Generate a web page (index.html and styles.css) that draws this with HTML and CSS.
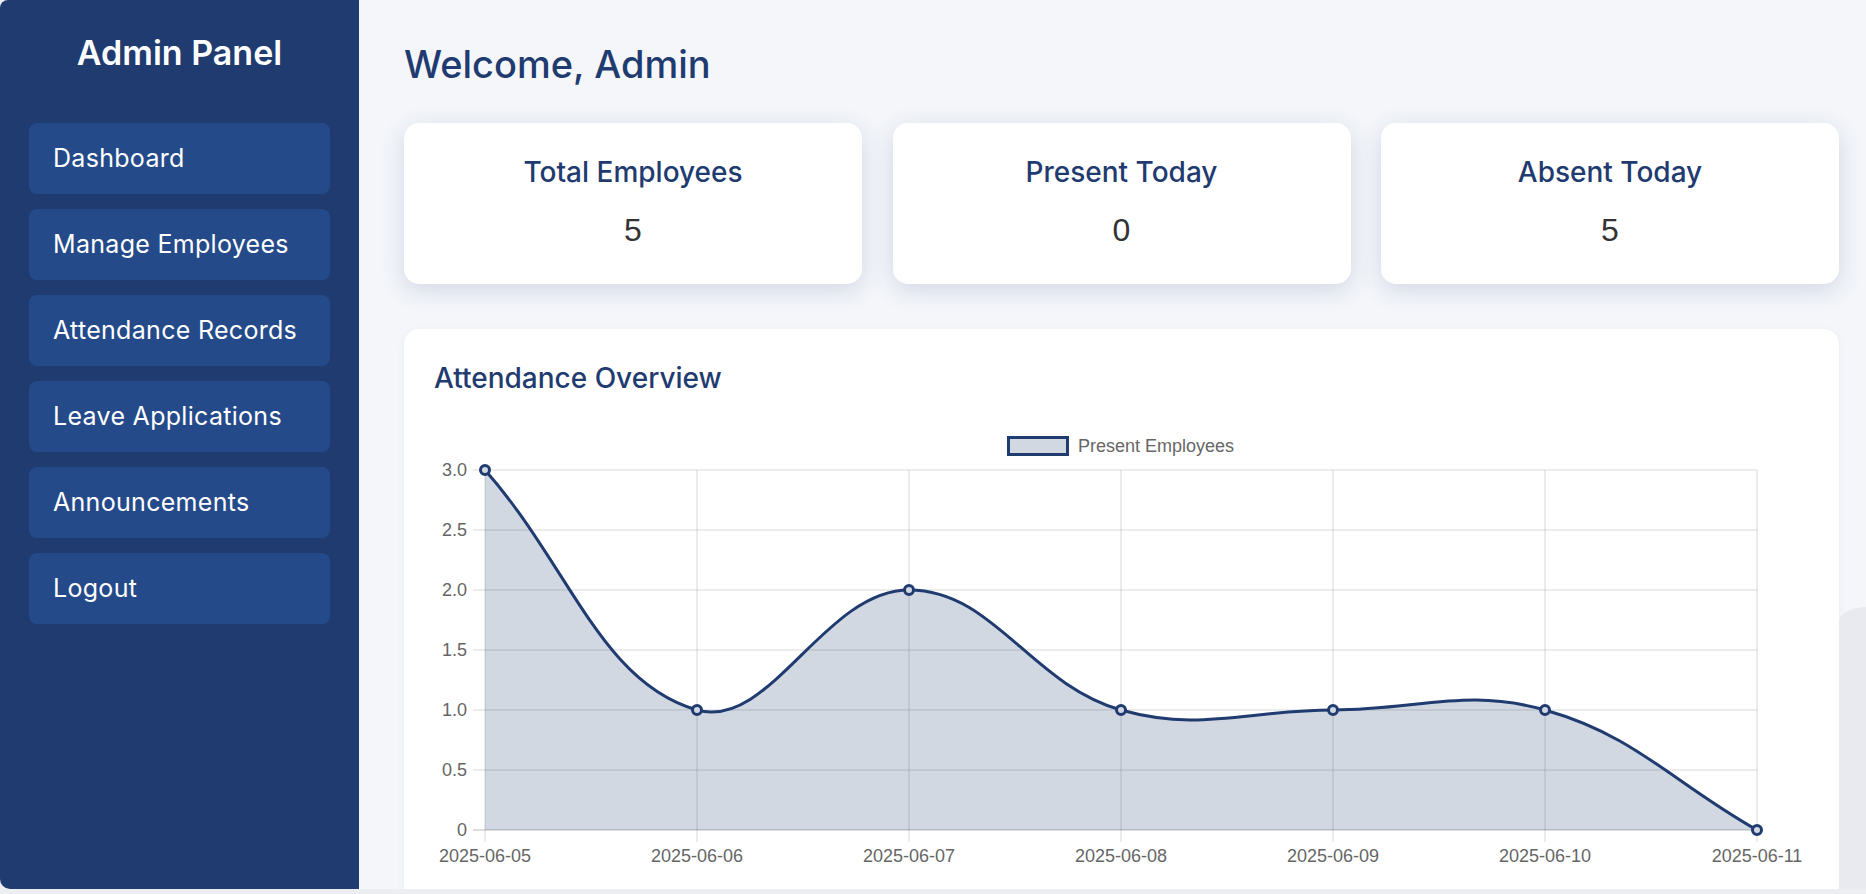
FILE: index.html
```html
<!DOCTYPE html>
<html lang="en">
<head>
    <meta charset="UTF-8">
    <meta name="viewport" content="width=device-width, initial-scale=1.0">
    <title>Admin Dashboard</title>
    <link rel="stylesheet" href="styles.css">
</head>
<body>
    <div class="app">
        <aside class="sidebar">
            <h2 class="brand">Admin Panel</h2>
            <nav class="nav">
                <a class="nav-link" href="#">Dashboard</a>
                <a class="nav-link" href="#">Manage Employees</a>
                <a class="nav-link" href="#">Attendance Records</a>
                <a class="nav-link" href="#">Leave Applications</a>
                <a class="nav-link" href="#">Announcements</a>
                <a class="nav-link" href="#">Logout</a>
            </nav>
        </aside>

        <main class="main">
            <h1 class="welcome">Welcome, Admin</h1>

            <section class="stats">
                <div class="stat-card">
                    <h3>Total Employees</h3>
                    <p>5</p>
                </div>
                <div class="stat-card">
                    <h3>Present Today</h3>
                    <p>0</p>
                </div>
                <div class="stat-card">
                    <h3>Absent Today</h3>
                    <p>5</p>
                </div>
            </section>

            <section class="chart-card">
                <h3 class="chart-title">Attendance Overview</h3>
                <svg class="chart" width="1375" height="480" viewBox="434 420 1375 480">
                    <!-- legend -->
                    <rect x="1008.5" y="437.5" width="59" height="17" fill="rgba(31,59,112,0.2)" stroke="#1f3b70" stroke-width="3"/>
                    <text class="legend" x="1078" y="452">Present Employees</text>

                    <!-- grid -->
                    <g stroke="rgba(0,0,0,0.1)" stroke-width="1.5">
                        <line x1="473" y1="470" x2="1757" y2="470"/>
                        <line x1="473" y1="530" x2="1757" y2="530"/>
                        <line x1="473" y1="590" x2="1757" y2="590"/>
                        <line x1="473" y1="650" x2="1757" y2="650"/>
                        <line x1="473" y1="710" x2="1757" y2="710"/>
                        <line x1="473" y1="770" x2="1757" y2="770"/>
                        <line x1="485" y1="470" x2="485" y2="842"/>
                        <line x1="697" y1="470" x2="697" y2="842"/>
                        <line x1="909" y1="470" x2="909" y2="842"/>
                        <line x1="1121" y1="470" x2="1121" y2="842"/>
                        <line x1="1333" y1="470" x2="1333" y2="842"/>
                        <line x1="1545" y1="470" x2="1545" y2="842"/>
                        <line x1="1757" y1="470" x2="1757" y2="842"/>
                    </g>
                    <line x1="473" y1="830" x2="1757" y2="830" stroke="rgba(0,0,0,0.18)" stroke-width="1.5"/>

                    <!-- y labels -->
                    <g class="tick" text-anchor="end">
                        <text x="467" y="476">3.0</text>
                        <text x="467" y="536">2.5</text>
                        <text x="467" y="596">2.0</text>
                        <text x="467" y="656">1.5</text>
                        <text x="467" y="716">1.0</text>
                        <text x="467" y="776">0.5</text>
                        <text x="467" y="836">0</text>
                    </g>

                    <!-- x labels -->
                    <g class="tick" text-anchor="middle">
                        <text x="485" y="862">2025-06-05</text>
                        <text x="697" y="862">2025-06-06</text>
                        <text x="909" y="862">2025-06-07</text>
                        <text x="1121" y="862">2025-06-08</text>
                        <text x="1333" y="862">2025-06-09</text>
                        <text x="1545" y="862">2025-06-10</text>
                        <text x="1757" y="862">2025-06-11</text>
                    </g>

                    <!-- data -->
                    <path fill="rgba(31,59,112,0.2)" d="M485,830 L485,470 C569.8,566 600.7,682.7 697,710 C770.3,730.7 824.2,590 909,590 C993.8,590 1030.3,684.3 1121,710 C1199.9,732.3 1248.2,710 1333,710 C1417.8,710 1466.1,687.7 1545,710 C1635.7,735.7 1672.2,782 1757,830 Z"/>
                    <path fill="none" stroke="#1f3b70" stroke-width="3" d="M485,470 C569.8,566 600.7,682.7 697,710 C770.3,730.7 824.2,590 909,590 C993.8,590 1030.3,684.3 1121,710 C1199.9,732.3 1248.2,710 1333,710 C1417.8,710 1466.1,687.7 1545,710 C1635.7,735.7 1672.2,782 1757,830"/>
                    <g fill="#d2d8e2" stroke="#1f3b70" stroke-width="3">
                        <circle cx="485" cy="470" r="4.5"/>
                        <circle cx="697" cy="710" r="4.5"/>
                        <circle cx="909" cy="590" r="4.5"/>
                        <circle cx="1121" cy="710" r="4.5"/>
                        <circle cx="1333" cy="710" r="4.5"/>
                        <circle cx="1545" cy="710" r="4.5"/>
                        <circle cx="1757" cy="830" r="4.5"/>
                    </g>
                </svg>
            </section>

            <div class="scroll-thumb"></div>
        </main>
    </div>
</body>
</html>
```

FILE: styles.css
```css
html, body {
    margin: 0;
    padding: 0;
    background: #eceef2;
}
.app {
    display: flex;
    height: 889px;
    overflow: hidden;
    background: #f4f6fa;
    border-radius: 8px 0 0 10px;
    font-family: "Inter", "Open Sans", sans-serif;
}

/* sidebar */
.sidebar {
    width: 359px;
    flex-shrink: 0;
    box-sizing: border-box;
    padding: 0 29px;
    background: #1f3b70;
}
.brand {
    margin: 31px 0 0;
    font-size: 34px;
    line-height: 44px;
    font-weight: 600;
    text-align: center;
    color: #fff;
}
.nav {
    display: flex;
    flex-direction: column;
    gap: 15px;
    margin-top: 48px;
}
.nav-link {
    display: block;
    height: 71px;
    line-height: 71px;
    padding: 0 24px;
    border-radius: 8px;
    background: #244a8a;
    color: #fff;
    font-size: 25px;
    letter-spacing: 0.3px;
    text-decoration: none;
}

/* main */
.main {
    flex: 1;
    position: relative;
    padding: 40px 27px 0 45px;
}
.welcome {
    margin: 0 0 35px;
    font-size: 38px;
    line-height: 48px;
    font-weight: 500;
    color: #1f3b70;
}
.stats {
    display: grid;
    grid-template-columns: repeat(3, 1fr);
    gap: 30.5px;
}
.stat-card {
    height: 161px;
    box-sizing: border-box;
    padding-top: 33px;
    border-radius: 15px;
    background: #fff;
    text-align: center;
    box-shadow: 0 6px 24px rgba(31, 59, 112, 0.16);
}
.stat-card h3 {
    margin: 0;
    font-size: 28px;
    line-height: 33px;
    font-weight: 500;
    color: #1f3b70;
}
.stat-card p {
    margin: 22px 0 0;
    font-family: "Liberation Sans", Arial, sans-serif;
    font-size: 32px;
    line-height: 38px;
    color: #333;
}
.chart-card {
    margin-top: 45px;
    padding: 31px 30px 0;
    border-radius: 15px;
    background: #fff;
    box-shadow: 0 2px 10px rgba(31, 59, 112, 0.05);
    height: 700px;
}
.chart-title {
    margin: 0 0 24px;
    font-size: 28px;
    line-height: 36px;
    font-weight: 500;
    color: #1f3b70;
}
.chart {
    display: block;
}
.chart text {
    font-family: "Liberation Sans", Arial, sans-serif;
    font-size: 18px;
    fill: #666;
}
.scroll-thumb {
    position: absolute;
    right: 0;
    top: 607px;
    bottom: 0;
    width: 27px;
    background: #e9eaef;
    border-top-left-radius: 27px 15px;
}
```
